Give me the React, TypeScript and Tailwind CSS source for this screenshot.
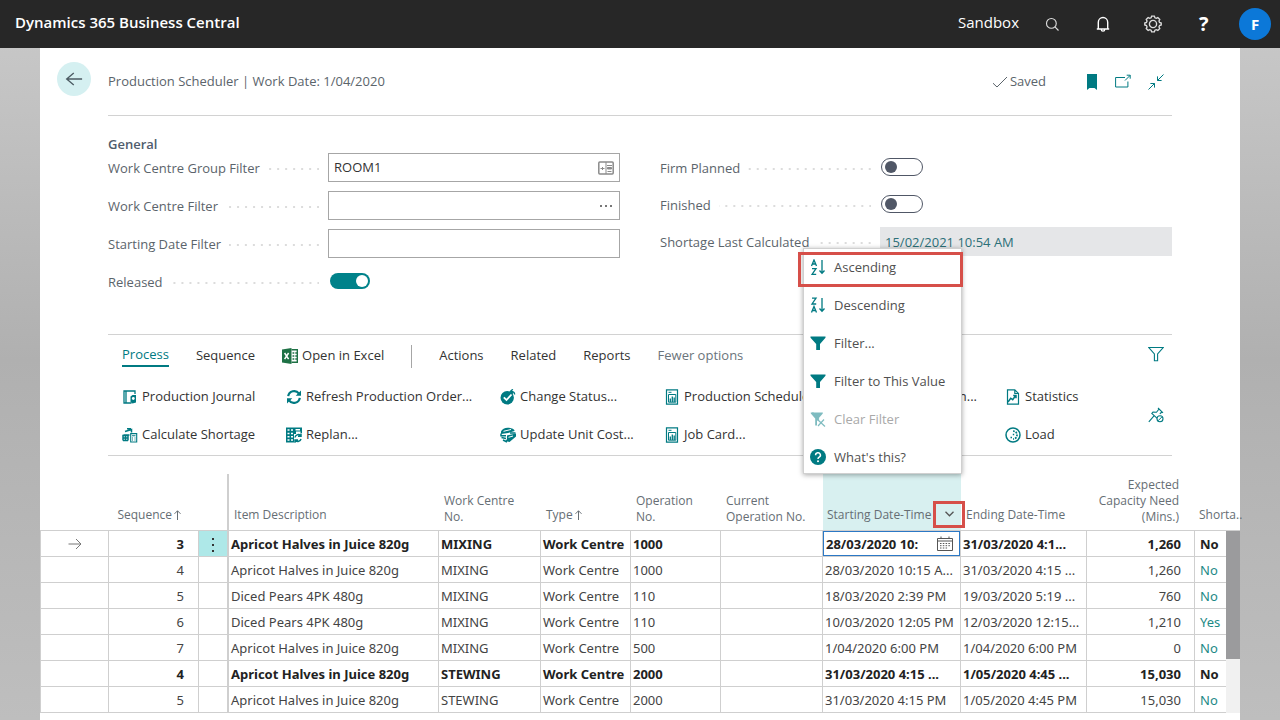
import React from 'react';

function Svg({ size = 16, className = '', children }: { size?: number; className?: string; children: React.ReactNode }) {
  return (
    <svg
      width={size}
      height={size}
      viewBox="0 0 16 16"
      fill="none"
      stroke="currentColor"
      strokeWidth="1.2"
      className={`shrink-0 ${className}`}
      aria-hidden="true"
    >
      {children}
    </svg>
  );
}

const SearchIcon = () => (
  <Svg size={15}>
    <circle cx="6.8" cy="6.8" r="5.2" />
    <path d="M10.6 10.6 14.4 14.4" />
  </Svg>
);

const BellIcon = () => (
  <Svg size={16}>
    <path d="M1.8 13h12.4M3.3 12.8V6.2a4.7 4.7 0 0 1 9.4 0v6.6M6.3 13.4a1.7 1.7 0 0 0 3.4 0" strokeWidth="1.4" />
  </Svg>
);

const GearIcon = () => (
  <Svg size={18}>
    <circle cx="8" cy="8" r="3.2" />
    <path d="M6.8 1h2.4l.5 1.5 1.2.5 1.4-.7 1.7 1.7-.7 1.4.5 1.2 1.5.5v1.8l-1.5.5-.5 1.2.7 1.4-1.7 1.7-1.4-.7-1.2.5-.5 1.5H6.8l-.5-1.5-1.2-.5-1.4.7L2 12l.7-1.4-.5-1.2L.7 8.900V7.100l1.500-.5.5-1.200L2 4l1.700-1.700 1.400.7 1.200-.5z" strokeWidth="1.2" />
  </Svg>
);

const BackIcon = () => (
  <Svg size={18}>
    <path d="M15.2 8H1.5M7.8 2.700 1.500 8l6.300 5.300" />
  </Svg>
);

const CheckIcon = () => (
  <Svg size={16}>
    <path d="M1 9.2 5 13 15 3" strokeWidth="1" />
  </Svg>
);

const BookmarkIcon = () => (
  <svg width="12" height="16" viewBox="0 0 12 16" className="shrink-0" aria-hidden="true">
    <path d="M1 0h10v16l-2.500-2h-5L1 16z" fill="currentColor" />
  </svg>
);

const PopOutIcon = () => (
  <Svg size={16}>
    <path d="M10 3.500H.6v9.500h12.300V7.500M10 6.500l5-5M11.700 1.200h3.500v3.500" strokeWidth="1" />
  </Svg>
);

const CollapseIcon = () => (
  <Svg size={16}>
    <path d="M15.500.5 9.500 6.500M9.500 2.400v4.100h4.100M.5 15.500l6-6M2.400 9.500h4.100v4.100" strokeWidth="1" />
  </Svg>
);

const LookupIcon = () => (
  <svg width="16" height="14" viewBox="0 0 16 14" fill="none" stroke="#8a8a8a" aria-hidden="true">
    <rect x=".8" y="1" width="14.4" height="12" rx="1" strokeWidth="1.5" />
    <path d="M8 1v12M9 4.500h5M9.500 10.500h4M2.500 7.500h4M4.500 6v3" />
    <path d="M9.500 6.500h4v1.500h-4z" fill="#8a8a8a" />
  </svg>
);

const ExcelIcon = () => (
  <svg width="16" height="16" viewBox="0 0 16 16" className="shrink-0" aria-hidden="true">
    <path d="M0 1.500 9.500 0v16L0 14.500z" fill="#1e7145" />
    <path d="M2.600 5l4 6.200M6.600 5l-4 6.200" stroke="#fff" strokeWidth="1.500" />
    <path d="M9.500 1.800h5.900v12.400H9.500M10.500 5h1.800M13.300 5H15M10.500 8h1.800M13.300 8H15M10.500 11h1.800M13.300 11H15" stroke="#1e7145" strokeWidth="1.500" fill="none" />
  </svg>
);

const JournalIcon = () => (
  <Svg>
    <path d="M2 2h2v12H2zM3.500 2h9.500v3M4 14h5.500" strokeWidth="1.300" />
    <path d="M8.500 7.500 10.500 6H14v7.500l-3.500 1-2-1.500z" fill="currentColor" stroke="none" />
    <circle cx="11.300" cy="9.500" r="1.400" fill="#fff" stroke="none" />
  </Svg>
);

const ShortageIcon = () => (
  <Svg>
    <path d="M3 4.500 9.500 2.500v3M5 1.800h4M1.500 8h6M1 13.500V8.500h5v5M3.500 8.500v5M1 11h5M1 13.500h5" strokeWidth="1.500" />
    <path d="M8.700 6.600h6v8.400h-6z" fill="#fff" strokeWidth="1.100" />
    <path d="M10 8.800h3.500M10 11h1M12.500 11h1M10 13h1M12.500 13h1" strokeWidth="1.100" />
  </Svg>
);

const RefreshIcon = () => (
  <Svg>
    <path d="M2.200 7.200A6 6 0 0 1 13 4.600M13.800 8.800A6 6 0 0 1 3 11.400" strokeWidth="2.200" />
    <path d="M15 1.500v5.300H9.700zM1 14.500V9.200h5.300z" fill="currentColor" stroke="none" />
  </Svg>
);

const ReplanIcon = () => (
  <Svg>
    <path d="M0 .5h16V6h-1.500V4.500H10V7H8v8.500H0z" fill="currentColor" stroke="none" />
    <path d="M1.500 3h2M5 3h2M9.500 2.800h4.500M1.500 6.500h2M5 6.500h2M1.500 9.800h2M5 9.800h2M1.500 13h2M5 13h2" stroke="#fff" strokeWidth="1.500" />
    <path d="M9 10.500a3.300 3.300 0 0 1 5.500-2M15 6.500v2.800h-3M15 12a3.300 3.300 0 0 1-5.500 1.500M9 15.800V13h3" strokeWidth="1.500" />
  </Svg>
);

const StatusIcon = () => (
  <Svg>
    <circle cx="7.200" cy="8.800" r="6.700" fill="currentColor" stroke="none" />
    <path d="M3.800 8.300 6.500 11l5-5.500" stroke="#fff" strokeWidth="1.800" />
    <path d="M9.500 0h6.500v6h-2.500l-1.500-2.500z" fill="#fff" stroke="none" />
    <path d="M14.500 5.500c.3-2-1-3.200-4-3M12.800.3 10.300 2.500l2.500 2.200" strokeWidth="1.400" />
  </Svg>
);

const CostIcon = () => (
  <Svg>
    <path d="M1 4.500C2 1.500 6 .3 9 .8s6 1.700 5.500 3.200L8 6 1 7z" fill="currentColor" stroke="none" />
    <path d="M3.500 4.300 11 2.500" stroke="#fff" strokeWidth="1" />
    <path d="M1 6.500v2.300h5M1.500 10.500 6 11.500M3 13l4 2M15.500 6H10" strokeWidth="1.500" />
    <path d="M7 8.500 16 6.500v3L9.500 15 5.500 14l1.500-2z" fill="currentColor" stroke="none" />
    <path d="M8.500 10.300 13 9" stroke="#fff" strokeWidth="1" />
  </Svg>
);

const ReportIcon = () => (
  <Svg>
    <path d="M2.500.8h11v14.400h-11z" strokeWidth="1.200" />
    <path d="M4.500 3.300h3M4.500 5.500h7.300v7.700H4.500z" strokeWidth="1" />
    <path d="M6.300 13V9.500M8.300 13V7.500M10.200 13V8.500" strokeWidth="1.300" />
  </Svg>
);

const StatisticsIcon = () => (
  <Svg>
    <path d="M2.500.8H9.800L13.500 4.500v10.700h-11zM9.800.8v3.700h3.700" strokeWidth="1.200" />
    <path d="M3 13l2.700-3.800 2 1.500 3-4.200M8.200 6.400h2.800v2.800" strokeWidth="1.500" />
  </Svg>
);

const LoadIcon = () => (
  <Svg>
    <circle cx="8" cy="8" r="7" strokeWidth="1.500" />
    <path d="M8 4a4 4 0 0 1 0 8" strokeWidth="1.700" strokeDasharray="1.800 1" />
    <path d="M5.500 10.500h1.500M7.800 7.500h1.400" strokeWidth="1.500" />
  </Svg>
);

const PinIcon = () => (
  <Svg>
    <path d="M10 1 15 5.800M11 2 8.500 5.300 5 5 3.800 6.500l5.700 5.200M14 5l-2.200 1.800M6 8.800.8 14.800" strokeWidth="1.100" />
    <circle cx="12" cy="11.800" r="3" fill="#fff" strokeWidth="1.100" />
    <path d="M10 13.800 14 9.800" strokeWidth="1" />
  </Svg>
);

const FilterOutlineIcon = () => (
  <Svg>
    <path d="M.8 1.500h14.400L9.600 8v6.800H6.400V8z" strokeWidth="1.100" />
  </Svg>
);

const FilterIcon = () => (
  <Svg>
    <path d="M.5 1.500h15v1.300L10 9v6H6.200V9L.5 2.800z" fill="currentColor" stroke="none" />
  </Svg>
);

const ClearFilterIcon = () => (
  <Svg className="opacity-50">
    <path d="M.8 1.500h12v1L8.500 7.500v1L7 10v4.500H5.200V7.500L.8 2.500z" fill="currentColor" stroke="none" />
    <path d="M7.500 8.500 15 15.500M14 8.500l-6 6.500M2.500 1.500 9 8.500" strokeWidth="1.200" />
  </Svg>
);

const HelpIcon = () => (
  <Svg>
    <circle cx="8" cy="8" r="8" fill="currentColor" stroke="none" />
    <path d="M5.600 6.200a2.400 2.400 0 1 1 3.600 2c-.8.500-1.200.9-1.200 1.900" stroke="#fff" strokeWidth="1.500" />
    <circle cx="8" cy="12.300" r="1" fill="#fff" stroke="none" />
  </Svg>
);

function SortIcon({ descending = false }: { descending?: boolean }) {
  const a = 'M0 0 2.500-6 5 0M1-2h3';
  const z = 'M.5-5.800h4L.5 0h4.200';
  return (
    <svg width="16" height="16" viewBox="0 0 16 16" fill="none" stroke="currentColor" strokeWidth="1.300" className="shrink-0" aria-hidden="true">
      <path d={descending ? z : a} transform="translate(1.500 7)" />
      <path d={descending ? a : z} transform="translate(1.500 15.500)" />
      <path d="M12 1v13M9.500 11.500l2.500 2.800 2.500-2.800" />
    </svg>
  );
}

const CalendarIcon = () => (
  <svg width="16" height="15" viewBox="0 0 16 15" fill="none" stroke="#555" className="shrink-0" aria-hidden="true">
    <path d="M.5 2.500h15v12H.5zM.5 5h15M4 .5v2.500M12 .5v2.500" />
    <path d="M3 7.500h10M3 9.700h10M3 12h8" strokeDasharray="1.500 1.300" />
  </svg>
);

const RowArrow = () => (
  <svg width="14" height="12" viewBox="0 0 14 12" fill="none" stroke="#777" className="mx-auto" aria-hidden="true">
    <path d="M.5 6h12.500M8 1l5 5-5 5" />
  </svg>
);

const SortArrow = () => (
  <svg width="7" height="10" viewBox="0 0 7 10" fill="none" stroke="currentColor" className="mb-[2px] ml-[2px] inline-block" aria-hidden="true">
    <path d="M3.500 10V.8M.5 3.800l3-3 3 3" />
  </svg>
);

function Label({ htmlFor, children }: { htmlFor: string; children: React.ReactNode }) {
  return (
    <div className="flex w-[220px] shrink-0 items-center pt-[2px] text-[#5b646b]">
      <label htmlFor={htmlFor}>{children}</label>
      <span className="ml-2 mr-[9px] h-[2px] flex-1 bg-[linear-gradient(to_left,#dcdcdc_2px,transparent_2px)] bg-[length:8px_2px] bg-right bg-repeat-x" />
    </div>
  );
}

function Toggle({ id, on = false }: { id: string; on?: boolean }) {
  return on ? (
    <input
      id={id}
      type="checkbox"
      role="switch"
      defaultChecked
      className="mb-[2px] ml-[2px] flex h-4 w-10 appearance-none items-center justify-end rounded-full bg-[#00828a] px-[2px] before:size-3 before:rounded-full before:bg-white"
    />
  ) : (
    <input
      id={id}
      type="checkbox"
      role="switch"
      className="mb-[2px] ml-[1px] flex h-[18px] w-[42px] appearance-none items-center rounded-full border border-[#505766] bg-white px-[3px] before:size-3 before:rounded-full before:bg-[#505766]"
    />
  );
}

function TextField({ id, label, value, children }: { id: string; label: string; value?: string; children?: React.ReactNode }) {
  return (
    <div className="flex h-[29px] items-center">
      <Label htmlFor={id}>{label}</Label>
      <div className="flex h-full min-w-0 flex-1 items-center border border-[#a6a6a6] px-[5px]">
        <input id={id} type="text" defaultValue={value} className="min-w-0 flex-1 text-[#333] outline-none" />
        {children}
      </div>
    </div>
  );
}

function Action({ icon, label }: { icon: React.ReactNode; label: string }) {
  return (
    <button type="button" className="flex h-[38px] items-center gap-1 whitespace-nowrap text-[#333]">
      <span className="text-[#007a82]">{icon}</span>
      {label}
    </button>
  );
}

function MenuItem({ icon, label, disabled }: { icon: React.ReactNode; label: string; disabled?: boolean }) {
  return (
    <button type="button" disabled={disabled} className="flex h-[34px] w-full items-center gap-2 px-[6px] pt-[2px] text-[13px] text-[#505050] disabled:text-[#a9a9a9]">
      <span className="text-[#007a82]">{icon}</span>
      {label}
    </button>
  );
}

function ColumnMenu() {
  return (
    <div className="absolute -right-[1px] bottom-full z-10 flex w-[159px] flex-col gap-1 border border-[#d0d0d0] bg-white shadow-[0_1px_5px_rgba(0,0,0,0.35)]">
      <div className="pointer-events-none absolute -left-[6px] top-[3px] h-[35px] w-[165px] border-3 border-[#d64f49]" />
      <MenuItem icon={<SortIcon />} label="Ascending" />
      <MenuItem icon={<SortIcon descending />} label="Descending" />
      <MenuItem icon={<FilterIcon />} label="Filter..." />
      <MenuItem icon={<FilterIcon />} label="Filter to This Value" />
      <MenuItem icon={<ClearFilterIcon />} label="Clear Filter" disabled />
      <MenuItem icon={<HelpIcon />} label="What's this?" />
    </div>
  );
}

const rows = [
  { seq: 3, item: 'Apricot Halves in Juice 820g', centre: 'MIXING', op: '1000', start: '28/03/2020 10:', end: '31/03/2020 4:1...', need: '1,260', short: 'No', bold: true, selected: true },
  { seq: 4, item: 'Apricot Halves in Juice 820g', centre: 'MIXING', op: '1000', start: '28/03/2020 10:15 A...', end: '31/03/2020 4:15 ...', need: '1,260', short: 'No' },
  { seq: 5, item: 'Diced Pears 4PK 480g', centre: 'MIXING', op: '110', start: '18/03/2020 2:39 PM', end: '19/03/2020 5:19 ...', need: '760', short: 'No' },
  { seq: 6, item: 'Diced Pears 4PK 480g', centre: 'MIXING', op: '110', start: '10/03/2020 12:05 PM', end: '12/03/2020 12:15...', need: '1,210', short: 'Yes' },
  { seq: 7, item: 'Apricot Halves in Juice 820g', centre: 'MIXING', op: '500', start: '1/04/2020 6:00 PM', end: '1/04/2020 6:00 PM', need: '0', short: 'No' },
  { seq: 4, item: 'Apricot Halves in Juice 820g', centre: 'STEWING', op: '2000', start: '31/03/2020 4:15 ...', end: '1/05/2020 4:45 ...', need: '15,030', short: 'No', bold: true },
  { seq: 5, item: 'Apricot Halves in Juice 820g', centre: 'STEWING', op: '2000', start: '31/03/2020 4:15 PM', end: '1/05/2020 4:45 PM', need: '15,030', short: 'No' },
];

function ScheduleTable() {
  const cell = 'overflow-hidden border-b border-r border-[#cfcfcf] px-[2px]';
  const head = 'px-[5px] pb-[7px] align-bottom font-normal';
  const headTall = 'px-[5px] pb-[5px] align-bottom font-normal';
  return (
    <table className="w-full table-fixed border-separate border-spacing-0 whitespace-nowrap text-[#444]">
      <colgroup>
        <col className="w-[69px]" />
        <col className="w-[90px]" />
        <col className="w-[30px]" />
        <col />
        <col className="w-[102px]" />
        <col className="w-[90px]" />
        <col className="w-[90px]" />
        <col className="w-[102px]" />
        <col className="w-[138px]" />
        <col className="w-[126px]" />
        <col className="w-[108px]" />
        <col className="w-[31px]" />
        <col className="w-[14px]" />
      </colgroup>
      <thead>
        <tr className="h-[57px] text-left text-[12px] leading-4 text-[#666e74] *:border-b *:border-[#cfcfcf]">
          <th className={head}></th>
          <th className={`${head} pr-[18px] text-right`}>Sequence<SortArrow /></th>
          <th className={`${head} border-r-2`}></th>
          <th className={head}>Item Description</th>
          <th className={headTall}>Work Centre<br />No.</th>
          <th className={head}>Type<SortArrow /></th>
          <th className={headTall}>Operation<br />No.</th>
          <th className={headTall}>Current<br />Operation No.</th>
          <th className="relative bg-[#d8f0f0] px-1 pb-[7px] align-bottom font-normal">
            Starting Date-Time
            <button type="button" aria-label="Column menu" className="absolute -right-1 bottom-[2px] flex h-[27px] w-8 items-center justify-center border-3 border-[#d64f49] pb-[2px] text-[#555]">
              <svg width="9" height="6" viewBox="0 0 9 6" fill="none" stroke="currentColor" strokeWidth="1.3" aria-hidden="true">
                <path d="M.5.8l4 4 4-4" />
              </svg>
            </button>
            <ColumnMenu />
          </th>
          <th className={head}>Ending Date-Time</th>
          <th className={`${headTall} pr-4 text-right`}>Expected<br />Capacity Need<br />(Mins.)</th>
          <th className="pb-[7px] pl-1 align-bottom font-normal" colSpan={2}>Shorta..</th>
        </tr>
      </thead>
      <tbody className="font-['Noto_Sans','Open_Sans',sans-serif] leading-5">
        {rows.map((r, i) => (
          <tr key={i} className={`h-[26px] ${r.bold ? 'font-bold text-[#222]' : ''}`}>
            <td className={`${cell} border-l`}>{r.selected && <RowArrow />}</td>
            <td className={`${cell} pr-[14px] text-right`}>{r.seq}</td>
            <td className={`border-b border-r-2 border-[#cfcfcf] text-center ${r.selected ? 'bg-[#aee8e8]' : ''}`}>
              {r.selected && (
                <button type="button" aria-label="More options" className="align-middle text-[#333]">
                  <svg width="4" height="16" viewBox="0 0 4 16" fill="currentColor" aria-hidden="true">
                    <path d="M1 1h2v2H1zM1 7h2v2H1zM1 13h2v2H1z" />
                  </svg>
                </button>
              )}
            </td>
            <td className={cell}>{r.item}</td>
            <td className={cell}>{r.centre}</td>
            <td className={cell}>Work Centre</td>
            <td className={cell}>{r.op}</td>
            <td className={cell}></td>
            {r.selected ? (
              <td className="border-b border-r border-[#cfcfcf] p-0">
                <div className="flex h-[25px] items-center border border-[#2b78c5] px-[2px]">
                  <input aria-label="Starting Date-Time" defaultValue={r.start} className="min-w-0 flex-1 outline-none" />
                  <button type="button" aria-label="Pick date" className="mx-1"><CalendarIcon /></button>
                </div>
              </td>
            ) : (
              <td className={cell}>{r.start}</td>
            )}
            <td className={cell}>{r.end}</td>
            <td className={`${cell} pr-[13px] text-right`}>{r.need}</td>
            <td className={`border-b border-[#cfcfcf] pl-[5px] ${r.bold ? '' : 'text-[#1d8a86]'}`}>{r.short}</td>
            {i === 0 && (
              <td rowSpan={rows.length} className="bg-[#f1f1f1] p-0 align-top">
                <div className="h-32 bg-[#9b9b9d]" />
              </td>
            )}
          </tr>
        ))}
      </tbody>
    </table>
  );
}

export default function App() {
  return (
    <div className="flex min-h-screen flex-col overflow-hidden bg-linear-to-b from-[#cacaca] via-[#b0b0b0] to-[#bebebe] font-['Open_Sans','Noto_Sans',sans-serif] text-[13px]">
      <header className="flex h-12 items-center bg-[#272727] pl-[15px] pr-[9px] text-white">
        <h1 className="mb-1 flex-1 text-[15px] font-semibold">Dynamics 365 Business Central</h1>
        <span className="mb-1 mr-[26px] text-[15px]">Sandbox</span>
        <div className="flex items-center">
          <button type="button" aria-label="Search" className="flex w-[50px] text-[#ddd]"><SearchIcon /></button>
          <button type="button" aria-label="Notifications" className="flex w-[49px]"><BellIcon /></button>
          <button type="button" aria-label="Settings" className="flex w-[55px] text-[#ddd]"><GearIcon /></button>
          <button type="button" aria-label="Help" className="w-[40px] text-left text-[20px] font-bold leading-6">?</button>
          <button type="button" className="size-8 rounded-full bg-[#0c78d8] text-[15px] font-bold">F</button>
        </div>
      </header>

      <main className="mx-10 flex-1 bg-white">
        <div className="flex h-[67px] items-center pl-[17px] pr-[68px]">
          <button type="button" aria-label="Back" className="mb-[5px] mr-[17px] flex size-[34px] items-center justify-center rounded-full bg-[#d5f0f1] text-[#4c5b63]">
            <BackIcon />
          </button>
          <h2 className="flex-1 text-[#5b646b]">Production Scheduler | Work Date: 1/04/2020</h2>
          <span className="flex items-center gap-[2px] text-[#5b646b]"><CheckIcon />Saved</span>
          <div className="ml-10 mr-2 flex items-center gap-[17px] text-[#007a82]">
            <button type="button" aria-label="Bookmark"><BookmarkIcon /></button>
            <button type="button" aria-label="Open in new window"><PopOutIcon /></button>
            <button type="button" aria-label="Collapse"><CollapseIcon /></button>
          </div>
        </div>

        <div className="mx-[68px] border-t border-[#d2d2d2] pb-[38px] pt-5">
          <h3 className="h-[17px] font-semibold leading-[17px] text-[#505c6d]">General</h3>
          <div className="grid grid-cols-2 gap-10">
            <div className="flex flex-col gap-[9px]">
              <TextField id="group" label="Work Centre Group Filter" value="ROOM1">
                <button type="button" aria-label="Look up"><LookupIcon /></button>
              </TextField>
              <TextField id="centre" label="Work Centre Filter">
                <button type="button" aria-label="Choose" className="w-4 text-[#777]">
                  <svg width="14" height="2" viewBox="0 0 14 2" fill="currentColor" className="mx-auto" aria-hidden="true">
                    <path d="M1 0h2v2H1zM6 0h2v2H6zM11 0h2v2h-2z" />
                  </svg>
                </button>
              </TextField>
              <TextField id="date" label="Starting Date Filter" />
              <div className="flex h-[29px] items-center">
                <Label htmlFor="released">Released</Label>
                <Toggle id="released" on />
              </div>
            </div>
            <div className="flex flex-col gap-2">
              <div className="flex h-[29px] items-center">
                <Label htmlFor="firm">Firm Planned</Label>
                <Toggle id="firm" />
              </div>
              <div className="flex h-[29px] items-center">
                <Label htmlFor="finished">Finished</Label>
                <Toggle id="finished" />
              </div>
              <div className="flex h-[29px] items-center">
                <Label htmlFor="shortage">Shortage Last Calculated</Label>
                <input id="shortage" readOnly value="15/02/2021 10:54 AM" className="h-full min-w-0 flex-1 bg-[#e5e6e8] px-[5px] text-[#2c7078] outline-none" />
              </div>
            </div>
          </div>
        </div>

        <div className="mx-[68px] flex border-y border-[#d2d2d2] pl-[14px] pr-2">
          <div className="min-w-0 flex-1">
            <nav className="flex h-[42px] items-center gap-[27px] whitespace-nowrap text-[#333]">
              <button type="button" className="border-b-2 border-[#007a82] text-[#007a82]">Process</button>
              <button type="button">Sequence</button>
              <button type="button" className="flex items-center gap-1"><ExcelIcon />Open in Excel</button>
              <span className="h-[23px] w-px bg-[#a6a6a6]" />
              <button type="button">Actions</button>
              <button type="button">Related</button>
              <button type="button">Reports</button>
              <button type="button" className="text-[#6b747b]">Fewer options</button>
            </nav>
            <div className="flex pb-px pt-px">
              <div className="w-[164px]">
                <Action icon={<JournalIcon />} label="Production Journal" />
                <Action icon={<ShortageIcon />} label="Calculate Shortage" />
              </div>
              <div className="w-[214px]">
                <Action icon={<RefreshIcon />} label="Refresh Production Order..." />
                <Action icon={<ReplanIcon />} label="Replan..." />
              </div>
              <div className="w-[164px]">
                <Action icon={<StatusIcon />} label="Change Status..." />
                <Action icon={<CostIcon />} label="Update Unit Cost..." />
              </div>
              <div className="flex w-[341px]">
                <div className="flex-1">
                  <Action icon={<ReportIcon />} label="Production Scheduler" />
                  <Action icon={<ReportIcon />} label="Job Card..." />
                </div>
                <div className="pr-7">
                  <Action icon={<ReportIcon />} label="Plan..." />
                </div>
              </div>
              <div>
                <Action icon={<StatisticsIcon />} label="Statistics" />
                <Action icon={<LoadIcon />} label="Load" />
              </div>
            </div>
          </div>
          <div className="flex flex-col justify-between pb-8 pt-[11px] text-[#007a82]">
            <button type="button" aria-label="Filter"><FilterOutlineIcon /></button>
            <button type="button" aria-label="Unpin"><PinIcon /></button>
          </div>
        </div>

        <div className="pt-[18px]">
          <ScheduleTable />
        </div>
      </main>
    </div>
  );
}
